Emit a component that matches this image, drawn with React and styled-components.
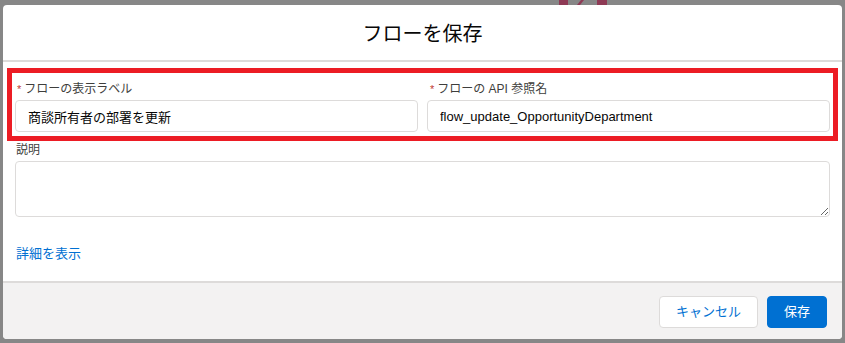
import React from "react";
import styled, { createGlobalStyle } from "styled-components";

const GlobalStyle = createGlobalStyle`
  html, body {
    margin: 0;
    padding: 0;
  }
  body {
    background: #878787;
    font-family: "Liberation Sans", "Noto Sans CJK JP", sans-serif;
    color: #080707;
  }
  * { box-sizing: border-box; }
`;

const Backdrop = styled.div`
  position: relative;
  width: 845px;
  height: 343px;
  padding: 5px 3px 4px;
  overflow: hidden;
`;

const BgLogo = styled.svg`
  position: absolute;
  top: 0;
  left: 555px;
`;

const Modal = styled.section`
  position: relative;
  height: 334px;
  background: #ffffff;
  border-radius: 4px;
  display: flex;
  flex-direction: column;
  overflow: hidden;
`;

const Header = styled.header`
  height: 57px;
  flex: none;
  border-bottom: 2px solid #dddbda;
  display: flex;
  align-items: center;
  justify-content: center;
`;

const Title = styled.h2`
  margin: 0;
  font-size: 20px;
  font-weight: 400;
  line-height: 26px;
  color: #080707;
  padding-top: 2px;
`;

const Body = styled.div`
  flex: 1;
  padding: 6px 4px 0;
  display: flex;
  flex-direction: column;
`;

const Highlight = styled.div`
  border: 5px solid #ec1c24;
  padding: 7px 3px 4px;
`;

const FieldRow = styled.div`
  display: grid;
  grid-template-columns: 1fr 1fr;
  column-gap: 9px;
`;

const Field = styled.div`
  display: flex;
  flex-direction: column;
`;

const Label = styled.label`
  display: block;
  font-size: 12px;
  line-height: 18px;
  color: #3e3e3c;
  padding-left: ${(p) => p.$indent || "2px"};
  margin-bottom: 2px;
`;

const Req = styled.abbr`
  color: #c23934;
  text-decoration: none;
  margin-right: 3px;
  font-size: 11px;
`;

const TextInput = styled.input`
  height: 32px;
  width: 100%;
  border: 1px solid #dddbda;
  border-radius: 4px;
  padding: 0 12px;
  font-family: inherit;
  font-size: 13px;
  color: #080707;
  background: #ffffff;
  outline: none;
`;

const TextArea = styled.textarea`
  height: 56px;
  width: 100%;
  border: 1px solid #dddbda;
  border-radius: 4px;
  padding: 6px 12px;
  font-family: inherit;
  font-size: 13px;
  background: #ffffff;
  outline: none;
  display: block;
`;

const DescField = styled(Field)`
  padding: 0 8px;
`;

const MoreLink = styled.a`
  display: inline-block;
  margin: 28px 0 0 9px;
  font-size: 13px;
  line-height: 18px;
  color: #0070d2;
  text-decoration: none;
  align-self: flex-start;
`;

const Footer = styled.footer`
  flex: none;
  border-top: 2px solid #dddbda;
  background: #f3f2f2;
  padding: 13px 15px 11px;
  display: flex;
  justify-content: flex-end;
  gap: 9px;
`;

const Button = styled.button`
  height: 32px;
  padding: 0 16px;
  border-radius: 4px;
  font-family: inherit;
  font-size: 13px;
  line-height: 30px;
  border: 1px solid ${(p) => (p.$brand ? "#0070d2" : "#dddbda")};
  background: ${(p) => (p.$brand ? "#0070d2" : "#ffffff")};
  color: ${(p) => (p.$brand ? "#ffffff" : "#0070d2")};
  cursor: pointer;
`;

export default function App() {
  return (
    <>
      <GlobalStyle />
      <Backdrop>
        <BgLogo width="60" height="6" viewBox="0 0 60 6">
          <rect x="4" y="0" width="9" height="5" fill="#8e3a55" />
          <polygon points="22,5 25,5 29,0 26,0" fill="#8e3a55" />
          <rect x="42" y="0" width="10" height="5" fill="#8e3a55" />
        </BgLogo>
        <Modal>
          <Header>
            <Title>フローを保存</Title>
          </Header>
          <Body>
            <Highlight>
              <FieldRow>
                <Field>
                  <Label>
                    <Req>*</Req>フローの表示ラベル
                  </Label>
                  <TextInput readOnly defaultValue="商談所有者の部署を更新" />
                </Field>
                <Field>
                  <Label $indent="3px">
                    <Req>*</Req>フローの API 参照名
                  </Label>
                  <TextInput readOnly defaultValue="flow_update_OpportunityDepartment" />
                </Field>
              </FieldRow>
            </Highlight>
            <DescField>
              <Label $indent="1px">説明</Label>
              <TextArea readOnly defaultValue="" />
            </DescField>
            <MoreLink href="#">詳細を表示</MoreLink>
          </Body>
          <Footer>
            <Button>キャンセル</Button>
            <Button $brand>保存</Button>
          </Footer>
        </Modal>
      </Backdrop>
    </>
  );
}
